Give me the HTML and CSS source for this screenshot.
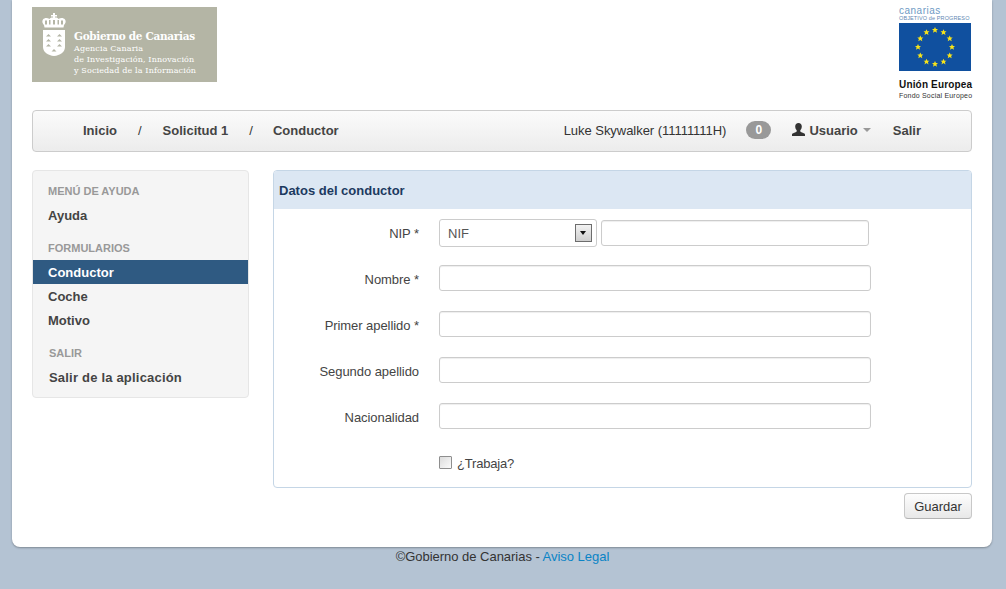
FILE: index.html
```html
<!DOCTYPE html>
<html lang="es">
<head>
<meta charset="utf-8">
<title>Datos del conductor</title>
<link rel="stylesheet" href="styles.css">
</head>
<body>
<div class="page">
  <header class="top">
    <div class="logo-gc">
      <svg class="arms" width="24" height="43" viewBox="0 0 24 43">
        <path fill="#fff" d="M11 0h2v2h2v1.600h-2v1.400h-2v-1.400h-2v-1.600h2z"/>
        <path fill="#fff" d="M12 5c2-1 4 0 4.500 1 2-1.500 5-1.500 6.500.5 1.300 1.800.5 4-1 5.500l-.5 2.500h-19l-.5-2.500c-1.500-1.500-2.300-3.700-1-5.500 1.500-2 4.500-2 6.500-.5.500-1 2.500-2 4.500-1z"/>
        <path fill="#b4b5a5" d="M3 7.500h2v4h-2zM7 7h1.500v4.500h-1.500zM11 7h2v4.500h-2zM15.500 7h1.500v4.500h-1.500zM19 7.500h2v4h-2z"/>
        <path fill="#fff" d="M1 17h22v17c0 5-5 8.500-11 9-6-.5-11-4-11-9z"/>
        <path fill="#b4b5a5" d="M6.500 21l2.500 2.500h-5zM17.500 21l2.500 2.500h-5zM6.500 26l2.500 2.500h-5zM17.500 26l2.500 2.500h-5zM6.500 31l2.500 2.500h-5zM17.500 31l2.500 2.500h-5zM12 36l2.500 2.500h-5z"/>
      </svg>
      <div class="gc-text">
        <div class="gc-title">Gobierno de Canarias</div>
        <div class="gc-line">Agencia Canaria</div>
        <div class="gc-line">de Investigación, Innovación</div>
        <div class="gc-line">y Sociedad de la Información</div>
      </div>
    </div>
    <div class="logo-eu">
      <div class="eu-can">canarias</div>
      <div class="eu-obj">OBJETIVO de PROGRESO</div>
      <svg class="flag" width="72" height="48" viewBox="0 0 72 48">
        <defs><polygon id="s" points="0,-3 .95,-1 3,-1 1.400,.4 2,2.700 0,1.400 -2,2.700 -1.400,.4 -3,-1 -.95,-1" fill="#f7e31a"/></defs>
        <rect width="72" height="48" fill="#10509f"/>
        <use href="#s" x="36" y="7"/><use href="#s" x="44.500" y="9.300"/><use href="#s" x="50.700" y="15.500"/><use href="#s" x="53" y="24"/><use href="#s" x="50.700" y="32.500"/><use href="#s" x="44.500" y="38.700"/><use href="#s" x="36" y="41"/><use href="#s" x="27.500" y="38.700"/><use href="#s" x="21.300" y="32.500"/><use href="#s" x="19" y="24"/><use href="#s" x="21.300" y="15.500"/><use href="#s" x="27.500" y="9.300"/>
      </svg>
      <div class="eu-ue">Unión Europea</div>
      <div class="eu-fse">Fondo Social Europeo</div>
    </div>
  </header>

  <nav class="navbar">
    <a class="nav-link">Inicio</a>
    <span class="nav-sep">/</span>
    <a class="nav-link">Solicitud 1</a>
    <span class="nav-sep nav-sep-tight">/</span>
    <a class="nav-link">Conductor</a>
    <div class="nav-right">
      <span class="nav-user">Luke Skywalker (11111111H)</span>
      <span class="badge">0</span>
      <a class="nav-link nav-menu">
        <svg class="user-icon" width="13" height="13" viewBox="0 0 13 13"><path fill="#333" d="M6.500 0c2 0 3.300 1.400 3.300 3.500 0 1.500-.7 3-1.500 3.800v1c0 .6 1.200 1 2.500 1.500 1.400.5 2.200 1 2.200 1.700v2h-13v-2c0-.7.800-1.200 2.200-1.700 1.300-.5 2.500-.9 2.500-1.500v-1c-.8-.8-1.500-2.300-1.500-3.800 0-2.100 1.300-3.500 3.300-3.500z"/></svg>
        Usuario
        <span class="caret"></span>
      </a>
      <a class="nav-link">Salir</a>
    </div>
  </nav>

  <div class="columns">
    <aside class="sidebar">
      <section class="side-group">
        <div class="side-head">Menú de ayuda</div>
        <a class="side-item">Ayuda</a>
      </section>
      <section class="side-group">
        <div class="side-head">Formularios</div>
        <a class="side-item active">Conductor</a>
        <a class="side-item">Coche</a>
        <a class="side-item">Motivo</a>
      </section>
      <section class="side-group">
        <div class="side-head side-shift">Salir</div>
        <a class="side-item side-exit">Salir de la aplicación</a>
      </section>
    </aside>

    <main class="main">
      <section class="panel">
        <h2 class="panel-head">Datos del conductor</h2>
        <form class="panel-body">
          <div class="row row-first">
            <label class="lbl">NIP *</label>
            <div class="select-wrap">
              <select class="select"><option>NIF</option></select>
              <span class="select-btn"></span>
            </div>
            <input class="input input-short" type="text">
          </div>
          <div class="row row-second">
            <label class="lbl">Nombre *</label>
            <input class="input" type="text">
          </div>
          <div class="row">
            <label class="lbl">Primer apellido *</label>
            <input class="input" type="text">
          </div>
          <div class="row">
            <label class="lbl">Segundo apellido</label>
            <input class="input" type="text">
          </div>
          <div class="row">
            <label class="lbl">Nacionalidad</label>
            <input class="input" type="text">
          </div>
          <div class="row row-check">
            <span class="lbl"></span>
            <input class="check" type="checkbox" id="trabaja">
            <label class="check-lbl" for="trabaja">¿Trabaja?</label>
          </div>
        </form>
      </section>
      <div class="actions"><button class="btn" type="button">Guardar</button></div>
    </main>
  </div>
</div>
<footer class="foot">©Gobierno de Canarias - <a class="foot-link">Aviso Legal</a></footer>
</body>
</html>
```
FILE: styles.css
```css
* { box-sizing: border-box; }
html, body { margin: 0; height: 100%; overflow: hidden; }
body {
  background: #b4c3d3;
  font-family: "Liberation Sans", Arial, sans-serif;
  font-size: 13px;
  color: #333;
}
.page {
  width: 980px;
  height: 547px;
  margin-left: 12px;
  padding: 0 20px;
  background: #fff;
  border-radius: 0 0 8px 8px;
  box-shadow: 0 1px 2px rgba(0, 0, 0, .3);
}
.top {
  height: 110px;
  display: flex;
  justify-content: space-between;
  align-items: flex-start;
}
.logo-gc {
  width: 185px;
  height: 75px;
  margin-top: 7px;
  background: #b4b5a5;
  display: flex;
  padding: 6px 0 0 10px;
  color: #fff;
}
.arms { flex: none; }
.gc-text { margin-left: 8px; padding-top: 16px; font-family: "DejaVu Serif", serif; }
.gc-title { font-weight: bold; font-size: 10.500px; line-height: 14px; white-space: nowrap; letter-spacing: -.33px; }
.gc-line { font-size: 8px; line-height: 11px; white-space: nowrap; letter-spacing: .14px; color: #fff; }
.logo-eu { width: 73px; margin-top: 7px; }
.eu-can { font-size: 10px; line-height: 8px; color: #6e9ac4; letter-spacing: .5px; }
.eu-obj { font-size: 5.500px; line-height: 7px; color: #5f88b3; white-space: nowrap; letter-spacing: .12px; }
.flag { display: block; margin-top: 1px; }
.eu-ue { font-size: 10px; font-weight: bold; line-height: 12px; margin-top: 8px; color: #111; white-space: nowrap; letter-spacing: .17px; }
.eu-fse { font-size: 7px; line-height: 9px; color: #333; white-space: nowrap; letter-spacing: .2px; }

.navbar {
  height: 42px;
  display: flex;
  align-items: center;
  padding: 0 50px 2px;
  border: 1px solid #ccc;
  border-radius: 4px;
  background: linear-gradient(#fbfbfb, #ececec);
}
.nav-link { font-weight: bold; color: #444; white-space: nowrap; }
.nav-sep { margin: 0 21px; font-weight: normal; color: #333; }
.nav-sep-tight { margin-right: 20px; }
.nav-right { margin-left: auto; display: flex; align-items: center; }
.nav-user { white-space: nowrap; color: #333; letter-spacing: -.04px; }
.badge {
  margin-left: 20px;
  width: 25px;
  height: 18px;
  border-radius: 9px;
  background: #999;
  color: #fff;
  font-weight: bold;
  font-size: 12px;
  line-height: 18px;
  text-align: center;
}
.nav-menu { display: flex; align-items: center; margin: 0 22px 0 21px; }
.user-icon { margin-right: 4px; margin-top: -2px; }
.caret {
  margin-left: 5px;
  border-top: 4px solid #999;
  border-left: 4px solid transparent;
  border-right: 4px solid transparent;
}

.columns { display: flex; gap: 24px; margin-top: 18px; align-items: flex-start; }
.sidebar {
  width: 217px;
  flex: none;
  padding: 12px 0 8px;
  background: #f5f5f5;
  border: 1px solid #e6e6e6;
  border-radius: 4px;
}
.side-group + .side-group { margin-top: 13px; }
.side-head {
  height: 16px;
  margin-bottom: 4px;
  padding-left: 15px;
  line-height: 16px;
  font-size: 11px;
  font-weight: bold;
  color: #999;
  text-transform: uppercase;
}
.side-shift { padding-left: 16px; }
.side-item {
  display: block;
  height: 24px;
  padding-left: 15px;
  line-height: 26px;
  font-weight: bold;
  color: #444;
}
.side-item.active { background: #2f5a82; color: #fff; }
.side-exit { padding-left: 16px; letter-spacing: .2px; }

.main { flex: 1; min-width: 0; }
.panel { border: 1px solid #c5d6e6; border-radius: 4px; }
.panel-head {
  margin: 0;
  height: 38px;
  padding-left: 5px;
  background: #dce7f3;
  color: #1c3a60;
  font-size: 13px;
  line-height: 40px;
  font-weight: bold;
  border-radius: 3px 3px 0 0;
}
.panel-body { padding: 10px 0 12px; }
.row { display: flex; align-items: center; height: 26px; margin-top: 20px; }
.row-first { height: 28px; margin-top: 0; }
.row-second { margin-top: 18px; }
.lbl { width: 145px; margin-right: 20px; padding-top: 2px; text-align: right; color: #444; flex: none; letter-spacing: -.06px; }
.row-first .lbl { padding-top: 0; }
.input {
  width: 432px;
  height: 26px;
  padding: 0 8px;
  border: 1px solid #ccc;
  border-radius: 3px;
  background: #fff;
  box-shadow: inset 0 1px 1px rgba(0, 0, 0, .07);
  font: inherit;
}
.input-short { width: 268px; margin-left: 4px; }
.select-wrap { position: relative; width: 158px; height: 28px; }
.select {
  appearance: none;
  -webkit-appearance: none;
  display: block;
  width: 100%;
  height: 100%;
  padding: 0 0 0 8px;
  border: 1px solid #ccc;
  border-radius: 3px;
  background: #fff;
  font: inherit;
  color: #555;
}
.select-btn {
  position: absolute;
  top: 5px;
  right: 5px;
  width: 17px;
  height: 18px;
  border: 1px solid #6d6d6d;
  background: linear-gradient(#f2f2f2, #cfcfcf);
}
.select-btn::after {
  content: "";
  position: absolute;
  left: 4px;
  top: 6px;
  border-top: 4px solid #111;
  border-left: 3.500px solid transparent;
  border-right: 3.500px solid transparent;
}
.check {
  appearance: none;
  -webkit-appearance: none;
  width: 13px;
  height: 13px;
  margin: 0 5px 0 0;
  border: 1px solid #8e8e8e;
  border-radius: 1px;
  background: linear-gradient(135deg, #dcdcdc, #fbfbfb);
  flex: none;
}
.check-lbl { color: #444; letter-spacing: -.2px; padding-top: 2px; }
.actions { display: flex; justify-content: flex-end; margin-top: 5px; }
.btn {
  width: 68px;
  height: 26px;
  padding: 0;
  border: 1px solid #c8c8c8;
  border-bottom-color: #b3b3b3;
  border-radius: 4px;
  background: linear-gradient(#fdfdfd, #e8e8e8);
  font: inherit;
  color: #333;
}
.foot { text-align: center; line-height: 20px; margin-left: -1px; color: #333; letter-spacing: -.03px; }
.foot-link { color: #0a84c6; }
```
